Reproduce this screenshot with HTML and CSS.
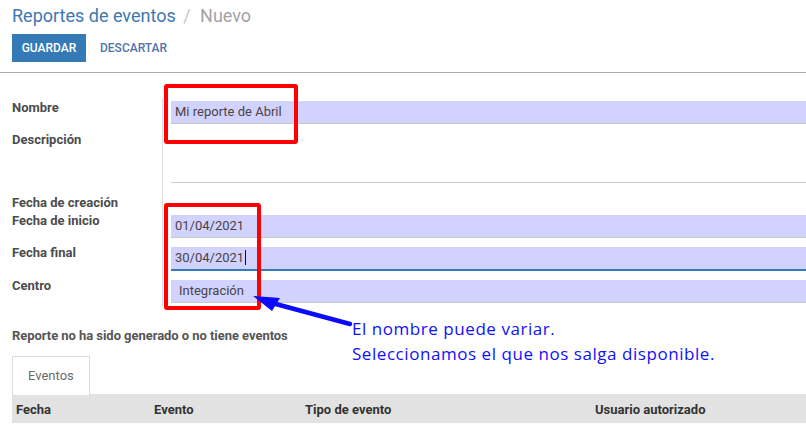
FILE: index.html
```html
<!DOCTYPE html>
<html lang="es">
<head>
  <meta charset="UTF-8">
  <title>Reportes de eventos - Nuevo</title>
  <link rel="stylesheet" href="styles.css">
</head>
<body>
  <div class="control-panel">
    <div class="breadcrumb">
      <a class="crumb">Reportes de eventos</a>
      <span class="sep">/</span>
      <span class="active">Nuevo</span>
    </div>
    <div class="buttons">
      <button class="btn btn-primary">GUARDAR</button>
      <button class="btn btn-link">DESCARTAR</button>
    </div>
  </div>

  <div class="sheet">
    <div class="group">
      <div class="row r-name">
        <label>Nombre</label>
        <div class="value"><div class="field filled">Mi reporte de Abril</div></div>
      </div>
      <div class="row r-desc">
        <label>Descripción</label>
        <div class="value"><div class="field area"></div></div>
      </div>
      <div class="row r-created">
        <label>Fecha de creación</label>
        <div class="value"></div>
      </div>
      <div class="row r-date">
        <label>Fecha de inicio</label>
        <div class="value"><div class="field filled">01/04/2021</div></div>
      </div>
      <div class="row r-date">
        <label>Fecha final</label>
        <div class="value"><div class="field filled focused">30/04/2021<span class="caret"></span></div></div>
      </div>
      <div class="row r-center">
        <label>Centro</label>
        <div class="value"><div class="field filled select">Integración</div></div>
      </div>
    </div>

    <p class="notice">Reporte no ha sido generado o no tiene eventos</p>

    <div class="tabs">
      <span class="tab">Eventos</span>
    </div>
    <div class="table-head">
      <span>Fecha</span>
      <span>Evento</span>
      <span>Tipo de evento</span>
      <span>Usuario autorizado</span>
    </div>
  </div>

  <!-- anotaciones de la captura -->
  <div class="mark mark-name"></div>
  <div class="mark mark-dates"></div>
  <svg class="arrow" width="806" height="435" viewBox="0 0 806 435">
    <line x1="350" y1="324" x2="272" y2="303" stroke="#0a0aff" stroke-width="4.5" stroke-linecap="round"/>
    <polygon points="253,296 280,298 272,311" fill="#0a0aff"/>
  </svg>
  <div class="note">
    El nombre puede variar.<br>
    Seleccionamos el que nos salga disponible.
  </div>
</body>
</html>
```

FILE: styles.css
```css
body { margin: 0; font-family: Roboto, "Liberation Sans", sans-serif; font-size: 13px; color: #4c4c4c; background: #fff; position: relative; overflow: hidden; }

.control-panel { padding: 5px 12px 10px; border-bottom: 1px solid #ababab; }
.breadcrumb { font-size: 18px; line-height: 22px; white-space: nowrap; }
.breadcrumb .crumb { color: #3d78b2; }
.breadcrumb .sep { color: #c9c9c9; margin: 0 5px 0 3px; }
.breadcrumb .active { color: #a3a3a3; }
.buttons { display: flex; gap: 4px; margin-top: 7px; }
.btn { font-family: Roboto, sans-serif; font-size: 12px; font-weight: 500; height: 28px; border: 0; border-radius: 0; padding: 0 10px; cursor: pointer; }
.btn-primary { background: #337ab7; color: #fff; width: 74px; padding: 0; }
.btn-link { background: none; color: #5373ad; }

.sheet { padding-top: 25px; }
.row { display: flex; }
.row label { width: 150px; padding-left: 12px; line-height: 20px; font-weight: bold; color: #4c4c4c; white-space: nowrap; }
.row .value { flex: 1; border-left: 1px solid #dcdcdc; padding-left: 8px; }
.r-name { height: 26px; }
.r-name .value { padding-top: 3px; }
.r-desc { height: 69px; }
.r-desc label { padding-top: 6px; }
.r-desc .value { padding-top: 6px; }
.r-created { height: 18px; }
.r-date { height: 32px; }
.r-date .value { padding-top: 4px; }
.r-date + .r-date { height: 33px; }
.r-center { height: 30px; }
.r-center .value { padding-top: 4px; }

.field { height: 22px; line-height: 22px; padding-left: 4px; border-bottom: 1px solid #c8c8c8; color: #4a4444; }
.field.filled { background: #d2d2fe; }
.field.area { height: 52px; border-bottom-color: #cdcdcd; }
.field.focused { border-bottom: 2px solid #337ab7; }
.field.select { padding-left: 8px; }
.caret { display: inline-block; width: 1px; height: 15px; background: #111; vertical-align: -3px; margin-left: 1px; }

.notice { margin: 20px 0 0; padding-left: 12px; line-height: 20px; font-weight: bold; color: #555; letter-spacing: -0.05px; }
.tabs { margin: 10px 0 0 12px; border-bottom: 1px solid #e2e2e2; display: flex; }
.tab { border: 1px solid #dcdcdc; border-bottom: 0; padding: 0 15px; line-height: 38px; color: #6b6b6b; background: #fff; margin-bottom: -1px; }
.table-head { margin-left: 12px; height: 28px; background: #e2e2e2; display: grid; grid-template-columns: 138px 151px 290px 1fr; align-items: center; font-weight: bold; color: #333; }
.table-head span { padding-left: 4px; }

.mark { position: absolute; border: 4px solid #ff0000; border-radius: 3px; box-sizing: border-box; }
.mark-name { left: 164px; top: 84px; width: 134px; height: 60px; }
.mark-dates { left: 164px; top: 203px; width: 97px; height: 107px; }
.arrow { position: absolute; left: 0; top: 0; pointer-events: none; }
.note { position: absolute; left: 352px; top: 316px; font-family: "Open Sans", sans-serif; font-size: 17px; letter-spacing: 0.55px; line-height: 25px; color: #1010ff; white-space: nowrap; }
```
